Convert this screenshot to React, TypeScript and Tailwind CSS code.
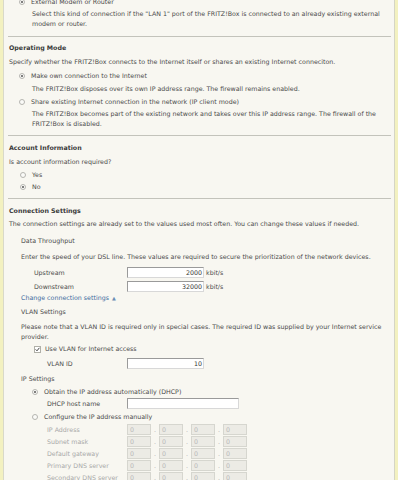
import React from "react";

function Radio({ checked }: { checked?: boolean }) {
  return (
    <span className="relative inline-flex h-[6px] w-[6px] shrink-0 items-center justify-center rounded-full border border-[#b5b5b0] bg-[#fbfbf8]">
      {checked && <span className="h-[2px] w-[2px] rounded-full bg-[#555]" />}
    </span>
  );
}

function Check() {
  return (
    <span className="inline-flex h-[7px] w-[7px] shrink-0 items-center justify-center border border-[#b0b0a8] bg-white">
      <svg width="5" height="5" viewBox="0 0 5 5">
        <path d="M0.6 2.4 L2 3.8 L4.4 0.8" stroke="#444" strokeWidth="1" fill="none" />
      </svg>
    </span>
  );
}

function Input({ value, w }: { value: string; w: string }) {
  return (
    <div className={`flex h-[11px] ${w} items-center justify-end border border-t-[#9a9a9a] border-l-[#9a9a9a] border-r-[#d8d8d8] border-b-[#d8d8d8] bg-white pr-[1px] text-[#333]`}>
      {value}
    </div>
  );
}

function Hr({ mt }: { mt: string }) {
  return <div className={`${mt} ml-[4px] mr-[3px] h-px bg-[#c3c3bb]`} />;
}

function IpBox() {
  return (
    <div className="flex h-[11px] w-[24px] items-center border border-[#d6d6cf] bg-[#ecebe5] pl-[2px] text-[#b8b8b8]">0</div>
  );
}

function Dot() {
  return <span className="flex w-[8px] justify-center leading-[11px] text-[#aaa]">.</span>;
}

function IpRow({ label }: { label: string }) {
  return (
    <div className="flex h-[12px] items-start">
      <div className="flex h-[11px] w-[123px] items-center pl-[43px] whitespace-nowrap text-[#a8a8a8]">{label}</div>
      <div className="flex items-start">
        <IpBox />
        <Dot />
        <IpBox />
        <Dot />
        <IpBox />
        <Dot />
        <IpBox />
      </div>
    </div>
  );
}

export default function App() {
  return (
    <div className="flex h-[480px] w-[398px] overflow-hidden bg-[#f8f7f1] font-['DejaVu_Sans',Verdana,sans-serif] text-[6.3px] leading-[10px] text-[#4a4a4a]">
      <div className="w-[3px] shrink-0 bg-[#f3f1c0]" />
      <div className="w-px shrink-0 bg-[#d9d9c9]" />
      <div className="flex-1 overflow-hidden">
        <div className="mt-[-3px] flex h-[10px] items-center pl-[15px]">
          <Radio checked />
          <span className="ml-[6px]">External Modem or Router</span>
        </div>
        <div className="mt-[2px] pl-[28px] pr-[8px]">
          Select this kind of connection if the "LAN 1" port of the FRITZ!Box is connected to an already existing external modem or router.
        </div>

        <Hr mt="mt-[7px]" />

        <div className="mt-[6px] pl-[5px] font-bold text-[#3a3a3a]">Operating Mode</div>
        <div className="mt-[4px] pl-[5px]">
          Specify whether the FRITZ!Box connects to the Internet itself or shares an existing Internet conneciton.
        </div>
        <div className="mt-[4px] flex h-[10px] items-center pl-[15px]">
          <Radio checked />
          <span className="ml-[6px]">Make own connection to the Internet</span>
        </div>
        <div className="mt-[3px] pl-[28px]">
          The FRITZ!Box disposes over its own IP address range. The firewall remains enabled.
        </div>
        <div className="mt-[3px] flex h-[10px] items-center pl-[15px]">
          <Radio />
          <span className="ml-[6px]">Share existing Internet connection in the network (IP client mode)</span>
        </div>
        <div className="mt-[2px] pl-[28px] pr-[8px]">
          The FRITZ!Box becomes part of the existing network and takes over this IP address range. The firewall of the FRITZ!Box is disabled.
        </div>

        <Hr mt="mt-[6px]" />

        <div className="mt-[7px] pl-[5px] font-bold text-[#3a3a3a]">Account Information</div>
        <div className="mt-[4px] pl-[5px]">Is account information required?</div>
        <div className="mt-[3px] flex h-[10px] items-center pl-[16px]">
          <Radio />
          <span className="ml-[6px]">Yes</span>
        </div>
        <div className="mt-[2px] flex h-[10px] items-center pl-[16px]">
          <Radio checked />
          <span className="ml-[6px]">No</span>
        </div>

        <Hr mt="mt-[6px]" />

        <div className="mt-[7px] pl-[5px] font-bold text-[#3a3a3a]">Connection Settings</div>
        <div className="mt-[3px] pl-[5px]">
          The connection settings are already set to the values used most often. You can change these values if needed.
        </div>

        <div className="mt-[7px] pl-[17px]">Data Throughput</div>
        <div className="mt-[6px] pl-[17px]">
          Enter the speed of your DSL line. These values are required to secure the prioritization of the network devices.
        </div>
        <div className="mt-[5px] flex h-[11px] items-center">
          <div className="w-[123px] pl-[30px]">Upstream</div>
          <Input value="2000" w="w-[77px]" />
          <span className="ml-[2px]">kbit/s</span>
        </div>
        <div className="mt-[3px] flex h-[11px] items-center">
          <div className="w-[123px] pl-[30px]">Downstream</div>
          <Input value="32000" w="w-[77px]" />
          <span className="ml-[2px]">kbit/s</span>
        </div>
        <div className="mt-[1px] flex items-center pl-[17px] text-[#3d6b9e]">
          <span>Change connection settings</span>
          <span className="ml-[3px] text-[5px] text-[#6b8db5]">▲</span>
        </div>

        <div className="mt-[4px] pl-[17px]">VLAN Settings</div>
        <div className="mt-[5px] pl-[17px] pr-[8px]">
          Please note that a VLAN ID is required only in special cases. The required ID was supplied by your Internet service provider.
        </div>
        <div className="mt-[2px] flex h-[10px] items-center pl-[30px]">
          <Check />
          <span className="ml-[4px]">Use VLAN for Internet access</span>
        </div>
        <div className="mt-[4px] flex h-[11px] items-center">
          <div className="w-[123px] pl-[43px]">VLAN ID</div>
          <Input value="10" w="w-[77px]" />
        </div>

        <div className="mt-[5px] pl-[17px]">IP Settings</div>
        <div className="mt-[3px] flex h-[10px] items-center pl-[28px]">
          <Radio checked />
          <span className="ml-[6px]">Obtain the IP address automatically (DHCP)</span>
        </div>
        <div className="mt-[1px] flex h-[11px] items-center">
          <div className="w-[123px] pl-[43px]">DHCP host name</div>
          <Input value="" w="w-[112px]" />
        </div>
        <div className="mt-[3px] flex h-[10px] items-center pl-[28px]">
          <Radio />
          <span className="ml-[6px]">Configure the IP address manually</span>
        </div>
        <div className="mt-[2px]">
          <IpRow label="IP Address" />
          <IpRow label="Subnet mask" />
          <IpRow label="Default gateway" />
          <IpRow label="Primary DNS server" />
          <IpRow label="Secondary DNS server" />
        </div>
      </div>
      <div className="w-px shrink-0 bg-[#d5d5c5]" />
      <div className="w-[3px] shrink-0 bg-[#f3f1c0]" />
    </div>
  );
}
